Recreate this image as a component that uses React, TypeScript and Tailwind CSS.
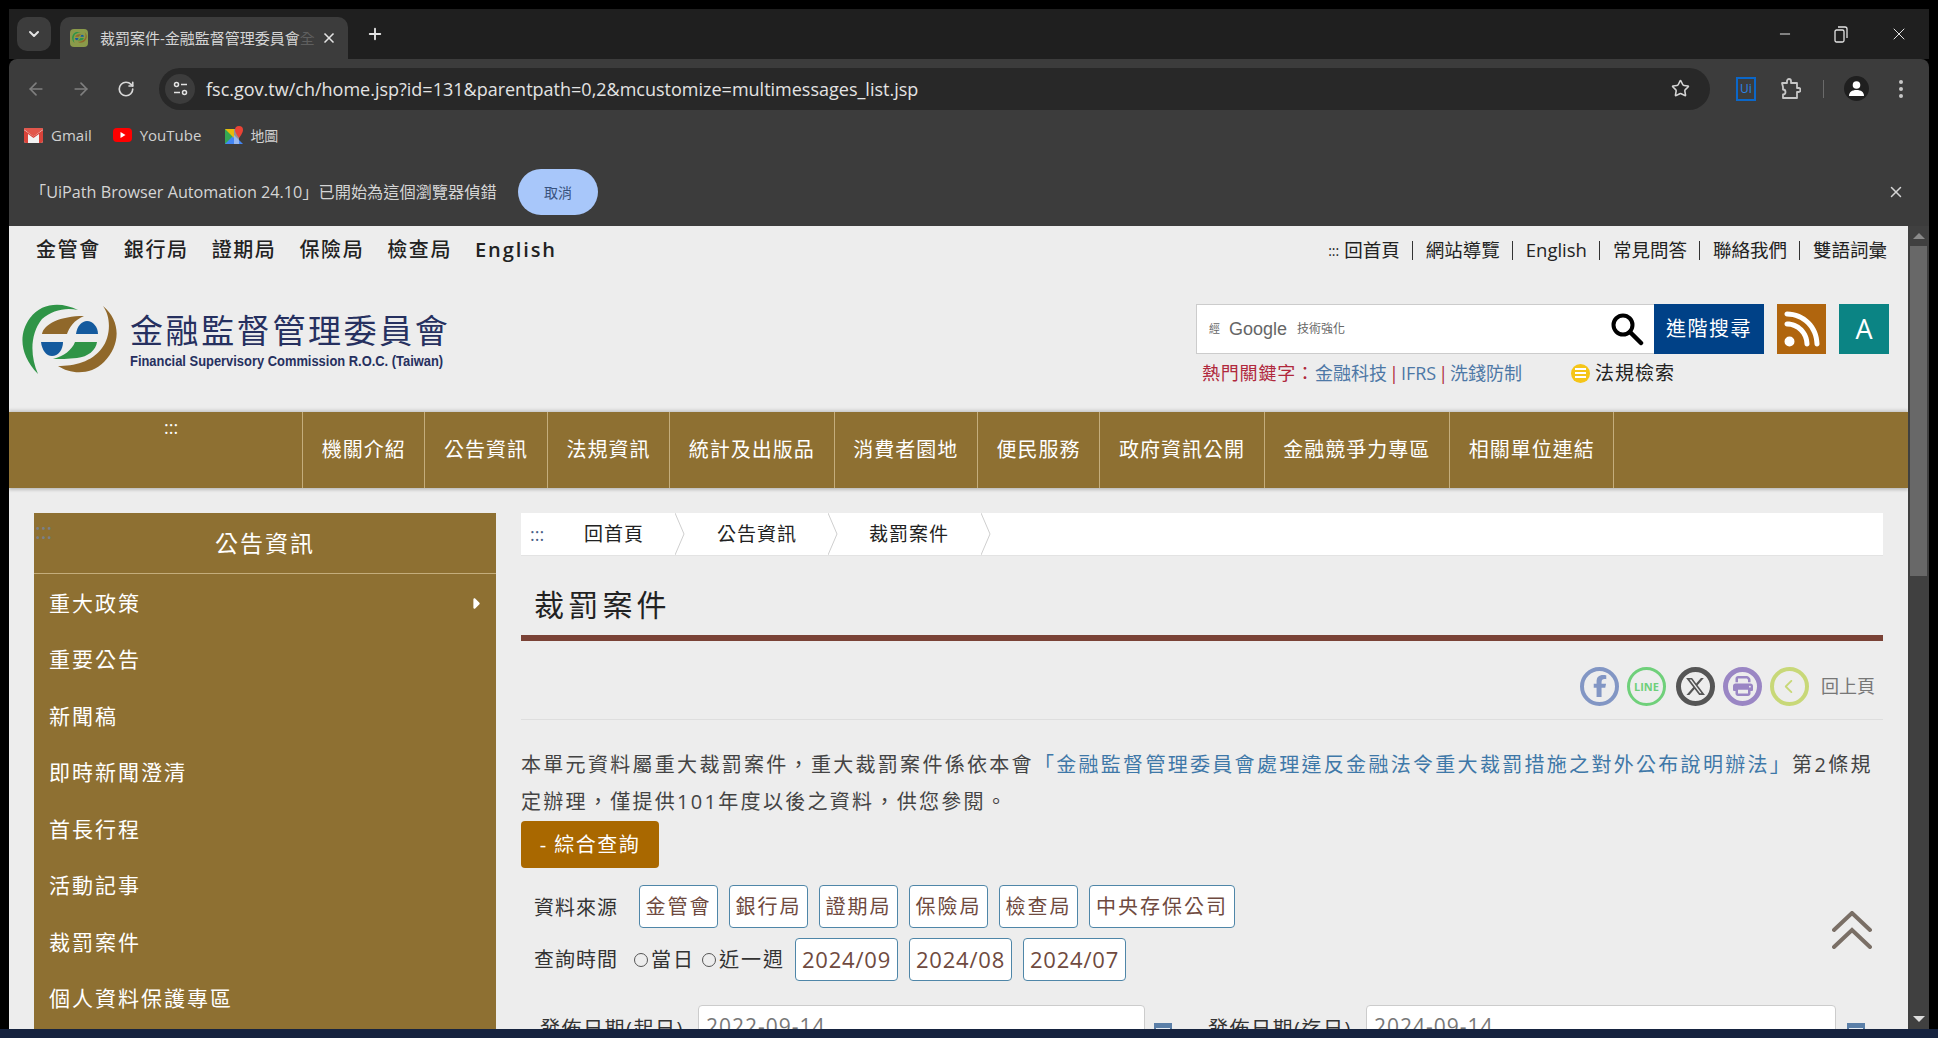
import React from 'react';
import { ArrowLeft, ArrowRight, RotateCw, Star, X, Plus, ChevronDown, Minus } from 'lucide-react';
import { FaFacebookF, FaPrint, FaRss, FaXTwitter, FaChevronLeft, FaCaretRight } from 'react-icons/fa6';

const sans = { fontFamily: '"Open Sans","Noto Sans CJK TC",sans-serif' };

function Logo({ size = 96 }: { size?: number }) {
  return (
    <svg width={size} height={size * 0.75} viewBox="0 0 96 72">
      <path d="M56 6C40-2 20-2 8 14C-4 30-2 52 16 70C8 52 8 30 20 15C30 6 44 3 56 6Z" fill="#2f9447" />
      <path d="M81 2C90 14 88 34 80 44C70 58 52 62 36 62C48 70 68 72 82 58C98 42 100 18 81 2Z" fill="#90682a" />
      <path d="M20 30C22 20 38 12 62 12C52 16 47 24 45 30Z" fill="#90682a" />
      <path d="M54 30C55 22 60 17 65 17C71 17 76 23 76 30Z" fill="#145a9e" />
      <path d="M19 38H41C41 46 36 52 30 52C24 52 20 46 19 38Z" fill="#145a9e" />
      <path d="M53 38H75C74 46 66 53 55 54C46 55 38 55 31 55C42 52 50 46 53 38Z" fill="#2f9447" />
    </svg>
  );
}

function Chrome() {
  return (
    <div className="shrink-0 text-[#e3e3e3]" style={sans}>
      <div className="h-[50px] bg-[#1f1f1f] flex items-end pl-[8px] relative">
        <div className="w-[34px] h-[34px] mb-[8px] rounded-[10px] bg-[#3c3c3c] flex items-center justify-center">
          <ChevronDown size={16} strokeWidth={3} />
        </div>
        <div className="ml-[9px] w-[288px] h-[42px] bg-[#3c3c3c] rounded-t-[10px] flex items-center pl-[10px]">
          <div className="w-[18px] h-[18px] rounded-[4px] bg-[#8a9a4a] flex items-center justify-center"><Logo size={15} /></div>
          <span className="ml-[12px] w-[215px] overflow-hidden whitespace-nowrap text-[15px] text-[#d5d5d5]">裁罰案件-金融監督管理委員會<span className="text-[#5f5f5f]">全</span></span>
          <X size={16} strokeWidth={2.5} className="ml-[6px]" />
        </div>
        <Plus size={18} strokeWidth={2.5} className="ml-[18px] mb-[16px]" />
        <div className="ml-auto flex items-center mb-[15px] pr-[20px] gap-[41px]">
          <Minus size={16} strokeWidth={1.5} />
          <svg width="14" height="17" viewBox="0 0 14 17" fill="none" stroke="currentColor" strokeWidth="1.3"><rect x="1" y="4" width="9" height="12" rx="1.5" /><path d="M4 1h7a2 2 0 0 1 2 2v9" /></svg>
          <X size={20} strokeWidth={1.2} />
        </div>
      </div>
      <div className="bg-[#3c3c3c] rounded-t-[8px]">
        <div className="h-[59px] flex items-center relative">
          <ArrowLeft size={20} className="ml-[17px] text-[#7f7f7f]" />
          <ArrowRight size={20} className="ml-[25px] text-[#7f7f7f]" />
          <RotateCw size={18} strokeWidth={2.2} className="ml-[26px] text-[#d8d8d8]" />
          <div className="ml-[24px] w-[1551px] h-[42px] rounded-full bg-[#282828] flex items-center pl-[6px]">
            <div className="w-[30px] h-[30px] rounded-full bg-[#3c3c3c] flex items-center justify-center">
              <svg width="15" height="15" viewBox="0 0 15 15" fill="none" stroke="#e3e3e3" strokeWidth="1.5"><circle cx="3.500" cy="3.500" r="2" /><path d="M8 3.500h6" /><circle cx="11.500" cy="11.500" r="2" /><path d="M1 11.500h6" /></svg>
            </div>
            <span className="ml-[11px] text-[18px] leading-none text-[#e3e3e3] whitespace-nowrap">fsc.gov.tw/ch/home.jsp?id=131&amp;parentpath=0,2&amp;mcustomize=multimessages_list.jsp</span>
            <Star size={19} className="ml-auto mr-[20px] text-[#d5d5d5]" />
          </div>
          <div className="ml-[26px] w-[20px] h-[24px] border-2 border-[#0b67c9] text-[#2a86ea] flex items-center justify-center text-[12px] leading-none">Ui</div>
          <svg width="21" height="22" viewBox="0 0 21 22" fill="none" stroke="#c7c7c7" strokeWidth="1.800" strokeLinejoin="round" className="ml-[24px]"><path d="M2 5h5V3a2 2 0 0 1 4 0v2h6v5h1.500a2 2 0 0 1 0 4H17v6H3v-3.500a2 2 0 0 0 0-5V9Z" /></svg>
          <div className="ml-[22px] w-px h-[18px] bg-[#6a6a6a]" />
          <div className="ml-[20px] w-[25px] h-[25px] rounded-full bg-[#1f1f1f] flex items-center justify-center">
            <svg width="17" height="17" viewBox="0 0 17 17" fill="#fff"><circle cx="8.500" cy="5" r="3.800" /><path d="M1 16c0-4 3-6 7.500-6s7.500 2 7.500 6Z" /></svg>
          </div>
          <svg width="4" height="20" viewBox="0 0 4 20" fill="#c7c7c7" className="ml-[30px]"><circle cx="2" cy="3" r="2" /><circle cx="2" cy="10" r="2" /><circle cx="2" cy="17" r="2" /></svg>
        </div>
        <div className="h-[34px] flex items-center text-[15px] text-[#d0d0d0]">
          <svg width="19" height="15" viewBox="0 0 19 15" className="ml-[15px]"><rect width="19" height="15" rx="2" fill="#f2f2f2" /><path d="M0 2v11a2 2 0 0 0 2 2h2V6l5.500 4L15 6v9h2a2 2 0 0 0 2-2V2L9.500 8.500Z" fill="#d9433a" /><path d="M0 1.500 9.500 8.500 19 1.500V1a1 1 0 0 0-1-1H1a1 1 0 0 0-1 1Z" fill="#e2574c" /></svg>
          <span className="ml-[8px]">Gmail</span>
          <svg width="19" height="14" viewBox="0 0 19 14" className="ml-[21px]"><rect width="19" height="14" rx="4" fill="#f00" /><path d="M7.500 4v6L12.500 7Z" fill="#fff" /></svg>
          <span className="ml-[8px]">YouTube</span>
          <svg width="18" height="18" viewBox="0 0 18 18" className="ml-[24px]"><path d="M0 3h9v15H0Z" fill="#34a853" /><path d="M0 18 9 9l9 9Z" fill="#4285f4" /><path d="M0 3l9 9V3Z" fill="#fbbc04" opacity=".9" /><path d="M9 3h5v15H9Z" fill="#e8eaed" opacity=".5" /><path d="M14 0a4 4 0 0 0-4 4c0 3 4 8 4 8s4-5 4-8a4 4 0 0 0-4-4Z" fill="#ea4335" /></svg>
          <span className="ml-[7px] text-[14px]">地圖</span>
        </div>
        <div className="h-[74px] pt-[6px] flex items-center text-[16.200px] text-[#d5d5d5]">
          <span className="ml-[21px] w-[466px] whitespace-nowrap">「UiPath Browser Automation 24.10」已開始為這個瀏覽器偵錯</span>
          <div className="ml-[22px] w-[80px] h-[46px] rounded-[23px] bg-[#a8c7fa] text-[#37527c] text-[14px] flex items-center justify-center">取消</div>
          <X size={18} className="ml-auto mr-[24px]" />
        </div>
      </div>
    </div>
  );
}

function Header() {
  const left = ['金管會', '銀行局', '證期局', '保險局', '檢查局'];
  const right = ['回首頁', '網站導覽', 'English', '常見問答', '聯絡我們', '雙語詞彙'];
  return (
    <div className="h-[186px] relative">
      <div className="flex justify-between items-center h-[47px] pt-[1px]">
        <div className="ml-[27px] flex gap-[23px] text-[20px] tracking-[1.600px] font-medium text-[#222]">
          {left.map(t => <span key={t}>{t}</span>)}
          <span className="font-semibold tracking-[1.900px]">English</span>
        </div>
        <div className="mr-[21px] text-[18.500px] text-[#222] whitespace-nowrap flex items-center">
          <span className="text-[14px] mr-[5px]">:::</span>
          {right.map((t, i) => (
            <React.Fragment key={t}>
              <span>{t}</span>
              {i < 5 && <span className="mx-[12.500px] w-px h-[19px] bg-[#333] inline-block" />}
            </React.Fragment>
          ))}
        </div>
      </div>
      <div className="flex justify-between mt-[31px]">
        <div className="ml-[13px] flex items-start">
          <Logo />
          <div className="ml-[12px] pt-[8px]">
            <div className="text-[33px] leading-[38px] tracking-[2.600px] text-[#26305f] whitespace-nowrap">金融監督管理委員會</div>
            <div className="text-[14.500px] leading-[16px] mt-[3px] font-bold text-[#26305f] whitespace-nowrap scale-x-[0.89] origin-left" style={{ fontFamily: '"Liberation Sans",sans-serif' }}>Financial Supervisory Commission R.O.C. (Taiwan)</div>
          </div>
        </div>
        <div className="mr-[19px]">
          <div className="flex">
            <div className="w-[458px] h-[50px] bg-white border border-[#ccc] border-r-0 flex items-center pl-[12px] text-[#666]">
              <span className="text-[11px]">經</span>
              <span className="ml-[9px] text-[18px]" style={{ fontFamily: '"Liberation Sans",sans-serif' }}>Google</span>
              <span className="ml-[10px] text-[12px]">技術強化</span>
              <svg width="34" height="34" viewBox="0 0 34 34" fill="none" stroke="#000" className="ml-auto mr-[10px]"><circle cx="13" cy="13" r="9.500" strokeWidth="4" /><path d="M20 20l11 11" strokeWidth="4.500" strokeLinecap="round" /></svg>
            </div>
            <div className="w-[110px] h-[50px] bg-[#004187] text-white text-[20px] tracking-[1.500px] flex items-center justify-center">進階搜尋</div>
            <div className="ml-[13px] w-[49px] h-[50px] bg-[#b0650e] flex items-center justify-center"><FaRss size={40} color="#fff" /></div>
            <div className="ml-[13px] w-[50px] h-[50px] bg-[#0b8484] text-white text-[27px] flex items-center justify-center">A</div>
          </div>
          <div className="mt-[5px] ml-[6px] flex items-center text-[18px] h-[28px] whitespace-nowrap">
            <span className="text-[#b0283c] w-[113px] tracking-[0.800px]">熱門關鍵字：</span>
            <span className="text-[#4d78a6]">金融科技</span>
            <span className="text-[#b0283c] mx-[2px]">|</span>
            <span className="text-[#4d78a6]">IFRS</span>
            <span className="text-[#b0283c] mx-[2px]">|</span>
            <span className="text-[#4d78a6]">洗錢防制</span>
            <div className="ml-[49px] w-[19px] h-[19px] rounded-full bg-[#f5c518] flex flex-col items-center justify-center gap-[2px]">
              <span className="w-[11px] h-[2px] bg-white" /><span className="w-[11px] h-[2px] bg-white" /><span className="w-[11px] h-[2px] bg-white" />
            </div>
            <span className="ml-[5px] text-[19px] tracking-[1px] text-[#222]">法規檢索</span>
          </div>
        </div>
      </div>
    </div>
  );
}

function Nav() {
  const items = ['機關介紹', '公告資訊', '法規資訊', '統計及出版品', '消費者園地', '便民服務', '政府資訊公開', '金融競爭力專區', '相關單位連結'];
  return (
    <div className="h-[76px] bg-[#8e7032] shadow-[0_-2px_3px_rgba(0,0,0,0.15),0_2px_3px_rgba(0,0,0,0.2)] flex text-white relative">
      <div className="w-[293px] pl-[155px] pt-[2px] text-[18px]">:::</div>
      <div className="flex border-r border-[#c4ad7c]">
        {items.map(t => (
          <div key={t} className="px-[18.700px] border-l border-[#c4ad7c] text-[20px] tracking-[1px] flex items-center whitespace-nowrap">{t}</div>
        ))}
      </div>
    </div>
  );
}

function Sidebar() {
  const items = ['重大政策', '重要公告', '新聞稿', '即時新聞澄清', '首長行程', '活動記事', '裁罰案件', '個人資料保護專區', '金融知識'];
  return (
    <div className="w-[462px] shrink-0 bg-[#8e7032] text-white self-start relative">
      <div className="absolute left-[1px] top-[2px] text-[#77808a] text-[22px] leading-[30px]">:::</div>
      <div className="h-[61px] border-b border-[#c4ad7c] flex items-center justify-center text-[23px] tracking-[2px]">公告資訊</div>
      <div className="pt-[1px]">
        {items.map((t, i) => (
          <div key={t} className="h-[56.500px] pl-[15px] pr-[12px] flex items-center justify-between text-[21px] tracking-[2px]">
            <span>{t}</span>
            {i === 0 && <FaCaretRight size={17} />}
          </div>
        ))}
      </div>
    </div>
  );
}

function Crumb({ t, w }: { t: string; w: number }) {
  return (
    <div className="flex items-center h-full">
      <span className="text-[19px] tracking-[1px] text-[#222] whitespace-nowrap" style={{ width: w }}>{t}</span>
      <svg width="10" height="42" viewBox="0 0 10 42" fill="none" stroke="#cfcfcf"><path d="M0 0l9 21L0 42" /></svg>
    </div>
  );
}

function Tag({ t, w }: { t: string; w: string }) {
  return <div className={`h-[43px] ${w} rounded-[4px] bg-white border border-[#4f86a8] text-[#6f4a40] flex items-center justify-center whitespace-nowrap`}>{t}</div>;
}

function Ring({ c, b, children }: { c: string; b: number; children: React.ReactNode }) {
  return <div className="w-[39px] h-[39px] rounded-full flex items-center justify-center" style={{ border: `${b}px solid ${c}`, color: c }}>{children}</div>;
}

function Calendar() {
  return (
    <svg width="18" height="18" viewBox="0 0 18 18" className="shrink-0 self-end"><rect width="18" height="18" fill="#5b7fa8" /><rect x="2" y="5" width="14" height="11" fill="#e8eef5" /><rect x="5" y="8" width="4" height="4" fill="#5b7fa8" /></svg>
  );
}

function Main() {
  return (
    <div className="ml-[25px] w-[1362px] shrink-0 text-[#333]">
      <div className="h-[43px] bg-white border-b border-[#e3e3e3] flex items-center">
        <span className="ml-[9px] mr-[34px] w-[20px] text-[#4b5f86] text-[18px]">:::</span>
        <Crumb t="回首頁" w={91} />
        <div className="w-[32px]" />
        <Crumb t="公告資訊" w={111} />
        <div className="w-[31px]" />
        <Crumb t="裁罰案件" w={112} />
      </div>
      <div className="h-[85px] border-b-[6px] border-[#7a4236] flex items-center pl-[13px] pt-[18px] text-[30px] tracking-[4.200px] text-[#222]">裁罰案件</div>
      <div className="h-[79px] border-b border-[#dedede] flex items-center justify-end pr-[8px] pt-[12px]">
        <div className="flex items-center gap-[8px]">
          <Ring c="#8296c4" b={4}><FaFacebookF size={22} /></Ring>
          <Ring c="#6fd07a" b={3}><span className="text-[11px] font-bold leading-none">LINE</span></Ring>
          <div className="ml-[2px]"><Ring c="#555" b={5}><FaXTwitter size={21} /></Ring></div>
          <Ring c="#9a86c4" b={5}><FaPrint size={20} /></Ring>
          <Ring c="#c8d878" b={4}><FaChevronLeft size={15} /></Ring>
          <span className="ml-[4px] text-[18px] text-[#777]">回上頁</span>
        </div>
      </div>
      <div className="mt-[26px] w-[1358px] text-[20px] leading-[37px] tracking-[2.300px] text-[#444]">
        本單元資料屬重大裁罰案件，重大裁罰案件係依本會<span className="text-[#3f78a8]">「金融監督管理委員會處理違反金融法令重大裁罰措施之對外公布說明辦法」</span>第2條規定辦理，僅提供101年度以後之資料，供您參閱。
      </div>
      <div className="mt-[1px] w-[138px] h-[47px] rounded-[4px] bg-[#a96800] text-white text-[20px] tracking-[1.500px] flex items-center justify-center">- 綜合查詢</div>
      <div className="mt-[17px] flex items-center pl-[13px]">
        <span className="w-[105px] text-[20px] tracking-[1px] text-[#333] pt-[2px]">資料來源</span>
        <div className="flex gap-[11px] text-[20px] tracking-[2px]">
          {['金管會', '銀行局', '證期局', '保險局', '檢查局'].map(t => <Tag key={t} t={t} w="w-[79px]" />)}
          <Tag t="中央存保公司" w="w-[146px]" />
        </div>
      </div>
      <div className="mt-[10px] flex items-center pl-[13px] text-[20px] tracking-[2px]">
        <span className="w-[100px] tracking-[1px] text-[#333]">查詢時間</span>
        <span className="w-[14px] h-[14px] rounded-full border border-[#555]" />
        <span className="ml-[3px]">當日</span>
        <span className="ml-[7px] w-[14px] h-[14px] rounded-full border border-[#555]" />
        <span className="ml-[3px]">近一週</span>
        <div className="ml-[10px] flex gap-[11px] text-[22px] tracking-[0.800px]">
          {['2024/09', '2024/08', '2024/07'].map(t => <Tag key={t} t={t} w="w-[103px]" />)}
        </div>
      </div>
      <div className="mt-[24px] flex items-start text-[20px] tracking-[1.500px]">
        <span className="ml-[19px] w-[158px] pt-[9px] whitespace-nowrap">發佈日期(起日)</span>
        <div className="w-[447px] h-[46px] rounded-[4px] bg-white border border-[#ccc] pl-[7px] pt-[5px] text-[21px] tracking-[1px] text-[#777]">2022-09-14</div>
        <div className="ml-[9px] mt-[18px]"><Calendar /></div>
        <span className="ml-[9px] mt-[10px] w-[27px]">~</span>
        <span className="w-[158px] pt-[9px] whitespace-nowrap">發佈日期(迄日)</span>
        <div className="w-[470px] h-[46px] rounded-[4px] bg-white border border-[#ccc] pl-[7px] pt-[5px] text-[21px] tracking-[1px] text-[#777]">2024-09-14</div>
        <div className="ml-[11px] mt-[18px]"><Calendar /></div>
      </div>
    </div>
  );
}

export default function App() {
  return (
    <div className="w-[1938px] h-[1038px] bg-black overflow-hidden flex flex-col" style={sans}>
      <div className="h-[9px] shrink-0" />
      <div className="flex-1 min-h-0 ml-[9px] w-[1920px] flex flex-col">
        <Chrome />
        <div className="flex-1 min-h-0 flex relative">
          <div className="w-[1899px] h-full bg-[#ededed] overflow-hidden">
            <Header />
            <Nav />
            <div className="flex pl-[25px] pt-[25px]">
              <Sidebar />
              <Main />
            </div>
          </div>
          <div className="w-[21px] h-full bg-[#404040] flex flex-col items-center">
            <div className="w-full h-[20px] flex items-center justify-center"><span className="w-0 h-0 border-l-[6px] border-r-[6px] border-b-[6px] border-l-transparent border-r-transparent border-b-[#8a8a8a]" /></div>
            <div className="w-[17px] h-[330px] bg-[#686868]" />
            <div className="mt-auto w-full h-[20px] flex items-center justify-center"><span className="w-0 h-0 border-l-[6px] border-r-[6px] border-t-[6px] border-l-transparent border-r-transparent border-t-[#ddd]" /></div>
          </div>
          <svg width="40" height="38" viewBox="0 0 40 38" fill="none" stroke="#7a6f66" strokeWidth="4" strokeLinecap="round" className="absolute left-[1823px] top-[685px]"><path d="M2 19 20 2l18 17" /><path d="M2 36 20 19l18 17" /></svg>
        </div>
      </div>
      <div className="h-[9px] shrink-0 bg-[#16233f]" />
    </div>
  );
}
